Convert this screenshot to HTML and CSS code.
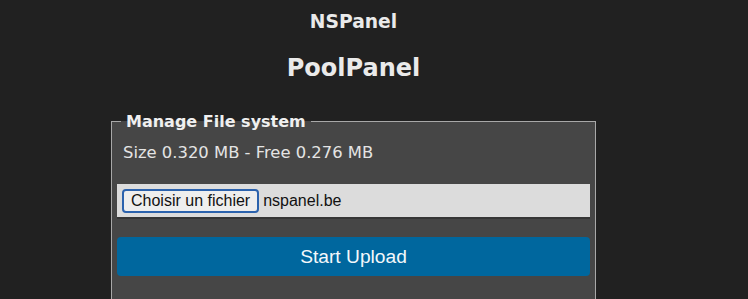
FILE: index.html
```html
<!DOCTYPE html>
<html lang="fr">
<head>
<meta charset="utf-8">
<title>PoolPanel</title>
<link rel="stylesheet" href="styles.css">
</head>
<body>
<div class="page">
  <h3 class="title-small">NSPanel</h3>
  <h2 class="title-big">PoolPanel</h2>
  <fieldset class="panel">
    <legend class="panel-legend">Manage File system</legend>
    <div class="size-info">Size 0.320 MB - Free 0.276 MB</div>
    <div class="file-bar">
      <button class="file-btn" type="button">Choisir un fichier</button>
      <span class="file-name">nspanel.be</span>
    </div>
    <button class="upload-btn" type="button">Start Upload</button>
    <div class="panel-rest"></div>
  </fieldset>
</div>
</body>
</html>
```

FILE: styles.css
```css
html, body {
  margin: 0;
  padding: 0;
  overflow: hidden;
  background: #212121;
}

body {
  font-family: "DejaVu Sans", Verdana, sans-serif;
  color: #eaeaea;
}

.page {
  width: 485px;
  margin-left: 111px;
  padding-top: 11px;
}

.title-small {
  margin: 0;
  text-align: center;
  font-size: 18.72px;
  line-height: 22px;
  font-weight: bold;
  color: #eaeaea;
}

.title-big {
  margin: 21px 0 0;
  text-align: center;
  font-size: 24px;
  line-height: 28px;
  font-weight: bold;
  color: #eaeaea;
}

.panel {
  margin: 30px 0 0;
  padding: 5px 5px 40px;
  border: 1px solid #a8a8a8;
  background: #464646;
  box-sizing: border-box;
  width: 485px;
  min-width: 0;
}

.panel-legend {
  margin-left: 4px;
  padding: 0 5px;
  font-size: 16px;
  font-weight: bold;
  color: #f0f0f0;
}

.size-info {
  margin-top: 7px;
  padding-left: 6px;
  font-size: 16.4px;
  line-height: 19px;
  color: #e4e4e4;
}

.file-bar {
  margin-top: 22px;
  box-sizing: border-box;
  padding: 5px;
  background: #dcdcdc;
  display: flex;
  align-items: center;
  gap: 4px;
  border-bottom: 2px solid #363636;
  height: 35px;
}

.file-btn {
  height: 24px;
  margin: 0;
  padding: 0 7px;
  border: 2px solid #2b62ad;
  border-radius: 4px;
  background: #eeeeee;
  font-family: "Liberation Sans", Arial, sans-serif;
  font-size: 16px;
  line-height: 18px;
  color: #111;
}

.file-name {
  font-family: "Liberation Sans", Arial, sans-serif;
  font-size: 16px;
  color: #111;
}

.upload-btn {
  display: block;
  width: 100%;
  margin-top: 18px;
  height: 39px;
  border: 0;
  border-radius: 4px;
  background: #00679e;
  color: #f4f8fb;
  font-family: "Liberation Sans", Arial, sans-serif;
  font-size: 19.2px;
  line-height: 39px;
  padding: 0;
}

.panel-rest {
  height: 20px;
}
```
